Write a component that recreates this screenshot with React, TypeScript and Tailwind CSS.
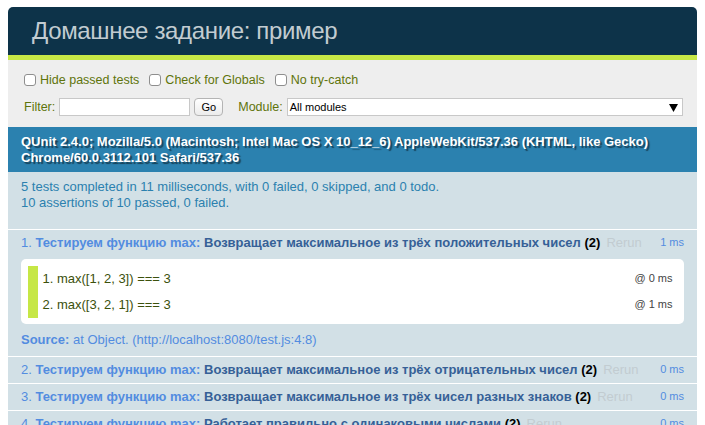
import React from 'react';

type Assertion = { text: string; time: string };
type Test = {
  n: number;
  name: string;
  runtime: string;
  asserts?: Assertion[];
  source?: string;
};

const tests: Test[] = [
  {
    n: 1,
    name: 'Возвращает максимальное из трёх положительных чисел',
    runtime: '1 ms',
    asserts: [
      { text: 'max([1, 2, 3]) === 3', time: '@ 0 ms' },
      { text: 'max([3, 2, 1]) === 3', time: '@ 1 ms' },
    ],
    source: 'at Object. (http://localhost:8080/test.js:4:8)',
  },
  { n: 2, name: 'Возвращает максимальное из трёх отрицательных чисел', runtime: '0 ms' },
  { n: 3, name: 'Возвращает максимальное из трёх чисел разных знаков', runtime: '0 ms' },
  { n: 4, name: 'Работает правильно с одинаковыми числами', runtime: '0 ms' },
];

function Check({ label }: { label: string }) {
  return (
    <label className="flex items-center mr-[10px]">
      <input
        type="checkbox"
        readOnly
        className="appearance-none h-3 w-3 rounded-[3px] border border-[#8e8e8e] bg-white"
      />
      <span className="ml-1">{label}</span>
    </label>
  );
}

function TestRow({ t }: { t: Test }) {
  return (
    <li className="border-b border-white bg-[#D2E0E6] px-[13px] pt-[5px] pb-[5px] text-[#528CE0]">
      {/* заголовок теста */}
      <div className="flex h-4 items-center leading-4">
        <span className="whitespace-nowrap">
          {t.n}. <b>Тестируем функцию max:</b>{' '}
          <b className="text-[#366097]">{t.name}</b>{' '}
          <b className="text-black">(2)</b>
          <span className="ml-[6px] text-[#C2CCD1]">Rerun</span>
        </span>
        <span className="ml-auto -mt-[3px] text-[11px]">{t.runtime}</span>
      </div>

      {t.asserts && (
        <ol className="mt-2 rounded-[5px] bg-white p-[6.5px]">
          {t.asserts.map((a, i) => (
            <li
              key={i}
              className="flex h-[26px] items-center border-l-[10px] border-[#C6E746] px-[5px] text-[#3C510C]"
            >
              <span>
                {i + 1}. {a.text}
              </span>
              <span className="ml-auto text-[11px] text-[#444]">{a.time}</span>
            </li>
          ))}
        </ol>
      )}

      {t.source && (
        <p className="mt-2 mb-[3px] h-4 leading-4">
          <b>Source:</b> {t.source}
        </p>
      )}
    </li>
  );
}

export default function App() {
  return (
    <main className="min-h-screen bg-white px-2 pt-[7px] font-['Liberation_Sans',Arial,sans-serif] text-[13px]">
      {/* HEADER */}
      <h1 className="h-12 rounded-t-[5px] bg-[#0D3349] pl-6 text-[24px] leading-[48px] font-normal tracking-[-0.35px] text-[#C2CCD1]">
        Домашнее задание: пример
      </h1>
      <div className="h-[5px] bg-[#C6E746]" />

      {/* TOOLBAR */}
      <div className="h-[67px] bg-[#EEEEEE] px-4 py-[6.5px] text-[12.5px] text-[#5E740B]">
        <div className="flex h-[27px] items-center">
          <Check label="Hide passed tests" />
          <Check label="Check for Globals" />
          <Check label="No try-catch" />
        </div>
        <div className="flex h-[27px] items-center">
          <span>Filter:</span>
          <div className="ml-1 h-[18px] w-[131px] border border-[#c8c8c8] bg-white" />
          <button className="ml-1 flex h-[18px] w-[29px] items-center justify-center rounded-[4px] border border-[#b4b4b4] bg-gradient-to-b from-white to-[#ececec] text-[11px] text-black">
            Go
          </button>
          <span className="ml-[15px]">Module:</span>
          <div className="ml-1 mr-[-2px] flex h-[18px] flex-1 items-center border border-[#c8c8c8] bg-white pl-[2px] pr-[4px] text-[11px] text-black">
            All modules
            <svg className="ml-auto" width="9" height="9" viewBox="0 0 9 9">
              <polygon points="0,1 9,1 4.5,9" fill="#000" />
            </svg>
          </div>
        </div>
      </div>

      {/* USER AGENT */}
      <div className="h-[45px] bg-[#2B81AF] px-[13px] py-[6.5px] font-bold leading-4 text-white [text-shadow:2px_2px_1px_rgba(0,0,0,0.5)]">
        <div className="whitespace-nowrap">
          QUnit 2.4.0; Mozilla/5.0 (Macintosh; Intel Mac OS X 10_12_6) AppleWebKit/537.36 (KHTML, like Gecko)
        </div>
        <div className="whitespace-nowrap">Chrome/60.0.3112.101 Safari/537.36</div>
      </div>

      {/* RESULT */}
      <div className="h-[58px] border-b border-white bg-[#D2E0E6] px-[13px] py-[6.5px] leading-4 text-[#2B81AF]">
        <div>5 tests completed in 11 milliseconds, with 0 failed, 0 skipped, and 0 todo.</div>
        <div>10 assertions of 10 passed, 0 failed.</div>
      </div>

      {/* TESTS */}
      <ol>
        {tests.map((t) => (
          <TestRow key={t.n} t={t} />
        ))}
      </ol>
    </main>
  );
}
